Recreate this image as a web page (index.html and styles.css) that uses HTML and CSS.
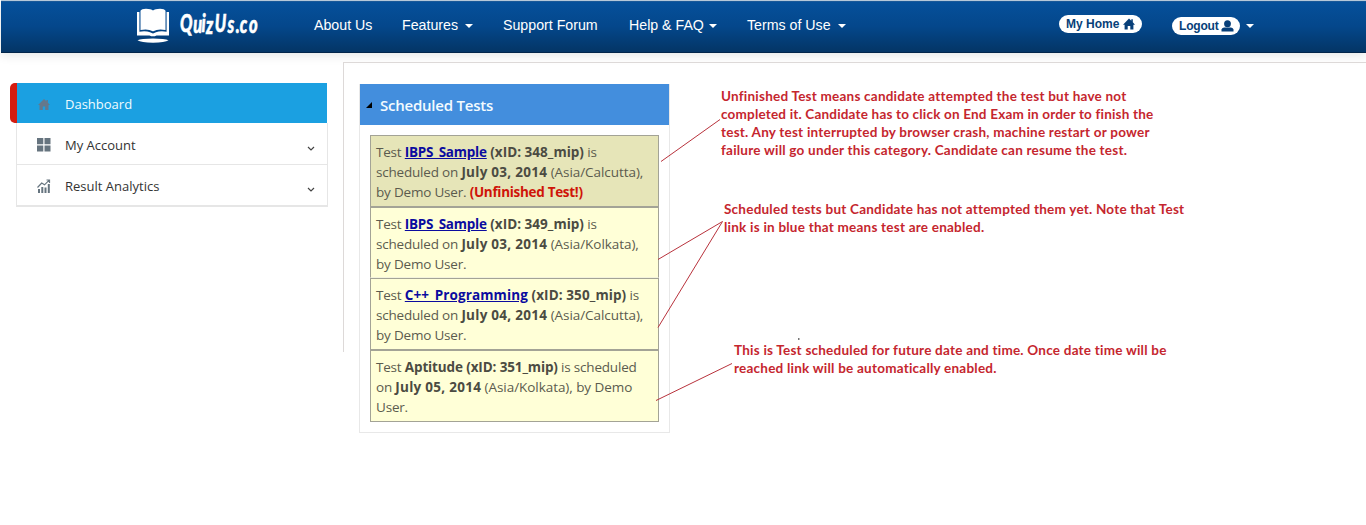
FILE: index.html
```html
<!DOCTYPE html>
<html lang="en">
<head>
<meta charset="utf-8">
<title>QuizUs.co</title>
<link rel="stylesheet" href="styles.css">
</head>
<body>
<header class="topbar">
  <a class="brand">
    <svg class="brand-book" width="34" height="36" viewBox="0 0 34 36">
      <path fill="#fff" d="M4.500 2.800Q5.500.8 10 .7 15 .8 17 2.600 19 .8 24 .7 28.500.8 29.500 2.800V22Q22 20.300 17.300 23.300H16.700Q12 20.300 4.500 22Z"/>
      <path fill="#fff" d="M1 4H3.400V23.700Q10 22.700 14 24.300L17 25.600 20 24.300Q24 22.700 30.600 23.700V4H33V27.400H20.500Q17 29.300 13.500 27.400H1Z"/>
      <path fill="#fff" d="M1.500 32.300Q5 30.600 17 30.600 29 30.600 32.500 32.300 29 34.700 17 34.700 5 34.700 1.500 32.300Z"/>
    </svg>
    <svg class="brand-name" width="88" height="44" viewBox="0 0 88 44">
      <text class="brand-text" x="1.500 21.500 34 41 54 73.500 86 92 106" y="29 30 29 31 29 30 30 30 30" transform="scale(.66 1)">QuizUs.co</text>
    </svg>
  </a>
  <nav class="menu">
    <a class="menu-about">About Us</a>
    <a class="menu-features">Features <i class="caret"></i></a>
    <a class="menu-forum">Support Forum</a>
    <a class="menu-help">Help &amp; FAQ <i class="caret"></i></a>
    <a class="menu-terms">Terms of Use <i class="caret"></i></a>
  </nav>
  <div class="account">
    <a class="pill home-pill">My Home <svg width="12" height="12" viewBox="0 0 12 12"><path fill="#073f79" d="M6 .5L0 6.700H1.600V11.500H4.700V8H7.300V11.500H10.400V6.700H12L9.800 4.300V1.300H8.300V2.800Z"/></svg></a>
    <a class="pill logout-pill">Logout <svg width="13" height="12" viewBox="0 0 13 12"><ellipse cx="6.500" cy="3.700" rx="3.400" ry="3.500" fill="#073f79"/><path fill="#073f79" d="M.5 11.500V9.500Q.7 8 3 7.400H10Q12.300 8 12.500 9.500V11.500Z"/></svg></a>
    <i class="caret"></i>
  </div>
</header>

<div class="page">
  <aside class="sidebar">
    <a class="side-row active"><svg width="14" height="13" viewBox="0 0 14 13"><path fill="#64788c" d="M7 1L1 7H2.500V12H5.800V8.500H8.200V12H11.500V7H13L10.900 4.800V2H9.400V3.300Z"/></svg><span>Dashboard</span></a>
    <a class="side-row"><svg width="14" height="14" viewBox="0 0 14 14"><path fill="#66747f" d="M0 0H6.300V6.300H0ZM7.500 0H13.500V6.300H7.500ZM0 7.500H6.300V13.500H0ZM7.500 7.500H13.500V13.500H7.500Z"/></svg><span>My Account</span><svg class="chevron" width="8" height="5" viewBox="0 0 8 5"><path d="M1 1L4 4 7 1" fill="none" stroke="#444" stroke-width="1.200"/></svg></a>
    <a class="side-row"><svg width="14" height="14" viewBox="0 0 14 14"><path fill="#66747f" d="M1 10H3V14H1ZM4.300 8H6.300V14H4.300ZM7.500 8.500H9.500V14H7.500ZM10.800 5H12.800V14H10.800Z"/><path d="M.5 8.500L4.700 4 7.500 5.800 12 1.300M9.500 1H12.500V4" fill="none" stroke="#66747f" stroke-width="1.200"/></svg><span>Result Analytics</span><svg class="chevron" width="8" height="5" viewBox="0 0 8 5"><path d="M1 1L4 4 7 1" fill="none" stroke="#444" stroke-width="1.200"/></svg></a>
  </aside>

  <main class="content">
    <section class="panel">
      <h2 class="panel-title"><svg width="6" height="6" viewBox="0 0 6 6"><path d="M6 0V6H0Z"/></svg><span>Scheduled Tests</span></h2>
      <div class="tests">
        <p class="test unfinished">Test <a>IBPS_Sample</a><b> (xID: 348_mip)</b> is<br>scheduled on <b class="date">July 03, 2014</b><span class="zone"> (Asia/Calcutta),</span><br>by Demo User. <b class="alert">(Unfinished Test!)</b></p>
        <p class="test open-bottom">Test <a>IBPS_Sample</a><b> (xID: 349_mip)</b> is<br>scheduled on <b class="date">July 03, 2014</b><span class="zone"> (Asia/Kolkata),</span><br>by Demo User.</p>
        <p class="test">Test <a class="wide">C++_Programming</a><b class="wide"> (xID: 350_mip)</b> is<br>scheduled on <b class="date">July 04, 2014</b><span class="zone"> (Asia/Calcutta),</span><br>by Demo User.</p>
        <p class="test">Test <b class="tight">Aptitude (xID: 351_mip)</b> is scheduled<br>on <b class="date">July 05, 2014</b><span class="zone"> (Asia/Kolkata), by Demo</span><br>User.</p>
      </div>
    </section>
    <div class="notes">
      <p class="note note-unfinished">Unfinished Test means candidate attempted the test but have not<br><span class="snug">completed it. Candidate has to click on End Exam in order to finish the</span><br>test. Any test interrupted by browser crash, machine restart or power<br>failure will go under this category. Candidate can resume the test.</p>
      <p class="note note-enabled">Scheduled tests but Candidate has not attempted them yet. Note that Test<br>link is in blue that means test are enabled.</p>
      <p class="note note-future">This is Test scheduled for future date and time. Once date time will be<br>reached link will be automatically enabled.</p>
    </div>
  </main>
</div>
<svg class="leaders" width="1366" height="525" viewBox="0 0 1366 525">
  <path d="M661 161.500L720 119.500M658 259.500L722.500 221.500L658 327.500M656 400.500L732 363.500" fill="none" stroke="#b8323c" stroke-width="1"/>
  <path d="M798 338H799.500V340H798Z" fill="#777"/>
</svg>
</body>
</html>
```
FILE: styles.css
```css
* { box-sizing: border-box; }
body {
  margin: 0;
  height: 525px;
  overflow: hidden;
  position: relative;
  background: #fff;
  font-family: "Open Sans", "Noto Sans", sans-serif;
}
.topbar {
  display: flex;
  height: 53px;
  margin-left: 1px;
  border-top: 1px solid #b5c8d9;
  border-bottom: 1px solid #02254a;
  background: linear-gradient(#2c6196 0, #05509b 1px, #04478b 50%, #043565 100%);
  box-shadow: 0 2px 10px rgba(0, 30, 30, .12);
  font-family: "Liberation Sans", Arial, sans-serif;
  color: #fff;
}
.brand { display: flex; align-items: flex-start; width: 313px; padding: 7px 0 0 135px; }
.brand-name { margin: -5px 0 0 9px; }
.brand-text { font: italic 900 25px Lato, sans-serif; fill: #fff; stroke: #fff; stroke-width: .6px; }
.menu {
  display: flex;
  align-items: flex-start;
  gap: 30px;
  width: 745px;
  padding-top: 16px;
  font-size: 14.2px;
  line-height: 17px;
  white-space: nowrap;
}
.menu a { display: flex; align-items: center; justify-content: space-between; }
.menu-about { width: 58px; }
.menu-features { width: 71px; }
.menu-forum { width: 96px; }
.menu-help { width: 88px; }
.menu-terms { width: 99px; }
.caret {
  width: 0;
  height: 0;
  border: 4px solid transparent;
  border-top-color: #fff;
  border-bottom: 0;
}
.account { display: flex; align-items: flex-start; }
.account .caret { margin: 23px 0 0 6px; }
.pill {
  display: flex;
  align-items: center;
  justify-content: space-between;
  height: 18px;
  padding: 0 7px;
  border-radius: 9px;
  background: #fff;
  color: #073f79;
  font-size: 12px;
  font-weight: bold;
  white-space: nowrap;
}
.home-pill { width: 83px; margin-top: 14px; }
.logout-pill { width: 68px; margin: 16px 0 0 30px; padding-right: 6px; letter-spacing: -.2px; }
.page { display: flex; padding-top: 9px; }
.sidebar { flex: none; width: 343px; padding: 21px 15px 0 10px; }
.side-row {
  display: flex;
  align-items: center;
  height: 42px;
  margin-left: 6px;
  padding: 3px 12px 0 20px;
  border: 1px solid #e6e6e6;
  border-top: 0;
  font-size: 13px;
  color: #333;
}
.side-row span { margin-left: 14px; }
.side-row.active {
  height: 40px;
  margin: 0 1px 0 0;
  padding-top: 2px;
  border: 0;
  border-left: 7px solid #d51c10;
  border-radius: 5px 0 0 5px;
  background: #1ba0e1;
  color: #f0fcff;
}
.side-row:last-child { padding-top: 1px; border-bottom: 2px solid #e6e6e6; }
.chevron { margin: 7px 0 0 auto; }
.content {
  display: flex;
  width: 1023px;
  height: 290px;
  border: 1px solid #ddd9d8;
  border-width: 1px 0 0 1px;
}
.panel {
  width: 311px;
  height: 349px;
  margin: 21px 0 0 15px;
  border: 1px solid #e8e8e8;
  border-top: 0;
}
.panel-title {
  display: flex;
  align-items: center;
  height: 41px;
  margin: 0;
  padding-left: 6px;
  background: #438edd;
  color: #f3fbff;
  font-size: 15px;
  font-weight: 600;
  letter-spacing: -.23px;
}
.panel-title span { margin-left: 8px; }
.tests { padding: 10px; }
.test {
  height: 72px;
  margin: 0;
  padding: 6px 0 0 5px;
  border: 1px solid #a3a396;
  background: #ffffd7;
  color: #5b5b4e;
  font-size: 13.5px;
  line-height: 20px;
  letter-spacing: -.2px;
  white-space: pre;
}
.unfinished { background: #e6e5b8; }
.open-bottom { height: 71px; border-bottom-color: #f3f3dc; }
.test b { font-weight: 700; color: #4b4b42; letter-spacing: .02px; }
.test a { font-weight: 700; color: #0b0b9f; letter-spacing: -.23px; text-decoration: underline; }
.test a.wide, .test b.wide { letter-spacing: .1px; }
.test b.tight { letter-spacing: -.13px; }
.test b.date { letter-spacing: .27px; }
.test b.alert { color: #cf1408; letter-spacing: -.3px; }
.zone { letter-spacing: -.06px; }
.notes { padding: 24px 0 0 51px; }
.note {
  margin: 0;
  color: #c5262e;
  font: bold 13.5px/18px Lato, sans-serif;
  letter-spacing: .23px;
  white-space: nowrap;
}
.note .snug { letter-spacing: .19px; }
.note-enabled { margin: 41px 0 0 3px; }
.note-future { margin: 105px 0 0 13px; }
.leaders { position: absolute; left: 0; top: 0; }
```
